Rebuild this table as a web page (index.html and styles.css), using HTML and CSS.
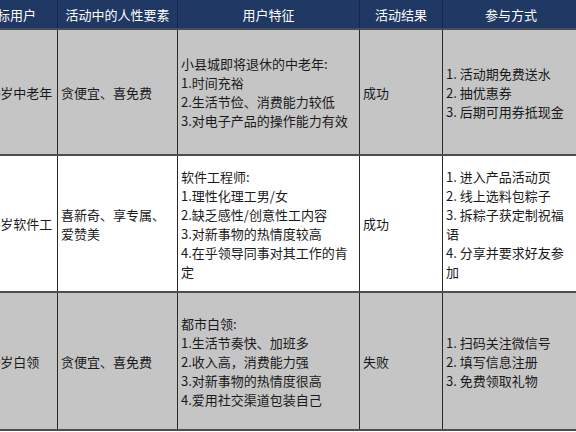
FILE: index.html
```html
<!DOCTYPE html>
<html lang="zh-CN">
<head>
<meta charset="utf-8">
<title>活动用户分析</title>
<link rel="stylesheet" href="styles.css">
</head>
<body>
<table class="sheet">
  <colgroup>
    <col class="c-user">
    <col class="c-trait">
    <col class="c-feature">
    <col class="c-result">
    <col class="c-way">
  </colgroup>
  <thead>
    <tr class="head">
      <th>目标用户</th>
      <th>活动中的人性要素</th>
      <th>用户特征</th>
      <th>活动结果</th>
      <th>参与方式</th>
    </tr>
  </thead>
  <tbody>
    <tr class="row grey r1">
      <td class="user">50-60岁中老年</td>
      <td>贪便宜、喜免费</td>
      <td>小县城即将退休的中老年:<br>1.时间充裕<br>2.生活节俭、消费能力较低<br>3.对电子产品的操作能力有效</td>
      <td>成功</td>
      <td>1. 活动期免费送水<br>2. 抽优惠券<br>3. 后期可用券抵现金</td>
    </tr>
    <tr class="row white r2">
      <td class="user">25-35岁软件工</td>
      <td>喜新奇、享专属、爱赞美</td>
      <td>软件工程师:<br>1.理性化理工男/女<br>2.缺乏感性/创意性工内容<br>3.对新事物的热情度较高<br>4.在乎领导同事对其工作的肯定</td>
      <td>成功</td>
      <td>1. 进入产品活动页<br>2. 线上选料包粽子<br>3. 拆粽子获定制祝福语<br>4. 分享并要求好友参加</td>
    </tr>
    <tr class="row grey r3">
      <td class="user">25-40岁白领</td>
      <td>贪便宜、喜免费</td>
      <td>都市白领:<br>1.生活节奏快、加班多<br>2.收入高，消费能力强<br>3.对新事物的热情度很高<br>4.爱用社交渠道包装自己</td>
      <td>失败</td>
      <td>1. 扫码关注微信号<br>2. 填写信息注册<br>3. 免费领取礼物</td>
    </tr>
  </tbody>
</table>
</body>
</html>
```
FILE: styles.css
```css
html, body {
  margin: 0;
  padding: 0;
  overflow: hidden;
  background: #ffffff;
}
body {
  font-family: "Noto Sans CJK SC", "Noto Sans", sans-serif;
  font-size: 13px;
  color: #1a1a1a;
}
.sheet {
  margin-left: -38px;
  border-collapse: collapse;
  table-layout: fixed;
  width: 617px;
}
.c-user { width: 95px; }
.c-trait { width: 120px; }
.c-feature { width: 182px; }
.c-result { width: 83px; }
.c-way { width: 137px; }
.sheet th, .sheet td {
  border-left: 1px solid #2a2a2a;
  border-right: 1px solid #2a2a2a;
  border-top: 2px solid #4d4d4d;
  border-bottom: 2px solid #4d4d4d;
  padding: 0 3px;
  line-height: 19px;
  vertical-align: middle;
  text-align: left;
  font-weight: normal;
}
.head th {
  background: #1f3864;
  color: #ffffff;
  text-align: center;
  height: 28px;
  padding: 0;
  border-top: none;
  border-left-color: #16284a;
  border-right-color: #16284a;
}
.grey td { background: #c5c5c5; }
.white td { background: #ffffff; }
.r1 td { height: 124px; }
.r2 td { height: 135px; }
.r3 td { height: 136px; }
.sheet td.user {
  white-space: nowrap;
  overflow: hidden;
  padding-left: 4px;
}
```
